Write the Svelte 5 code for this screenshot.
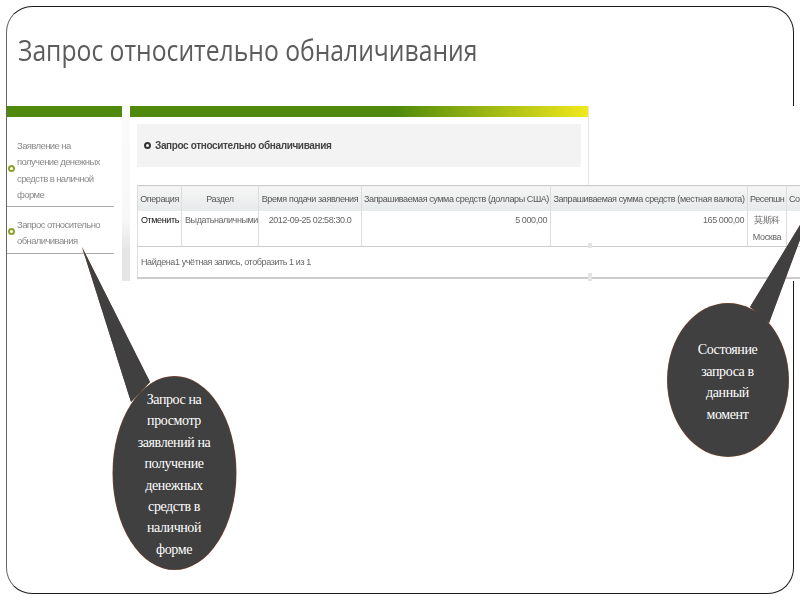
<script>
  const columns = [
    { label: "Операция", width: 44 },
    { label: "Раздел", width: 77 },
    { label: "Время подачи заявления", width: 103 },
    { label: "Запрашиваемая сумма средств (доллары США)", width: 189 },
    { label: "Запрашиваемая сумма средств (местная валюта)", width: 197 },
    { label: "Ресепшн", width: 39 },
    { label: "Состояние", width: 60 },
  ];

  const bubbles = [
    {
      tail: "M150 382 L82 247 L131 402",
      cx: 174.5, cy: 473, rx: 62, ry: 97,
      top: 399, step: 21.4,
      lines: ["Запрос на", "просмотр", "заявлений на", "получение", "денежных", "средств в", "наличной", "форме"],
    },
    {
      tail: "M750 307 L814 202 L769 323",
      cx: 728, cy: 380, rx: 61, ry: 77,
      top: 349, step: 21.5,
      lines: ["Состояние", "запроса в", "данный", "момент"],
    },
  ];
</script>

<div class="slide">
  <h1>Запрос относительно обналичивания</h1>

  <div class="shot">
    <aside>
      <div class="bar"></div>
      <ul>
        <li>Заявление на получение денежных средств в наличной форме</li>
        <li>Запрос относительно обналичивания</li>
      </ul>
    </aside>

    <main>
      <div class="panel">
        <div class="bar gradient"></div>
        <div class="heading"><i></i>Запрос относительно обналичивания</div>
      </div>

      <table>
        <colgroup>
          {#each columns as c}
            <col style="width: {c.width}px" />
          {/each}
        </colgroup>
        <thead>
          <tr>
            {#each columns as c}
              <th>{c.label}</th>
            {/each}
          </tr>
        </thead>
        <tbody>
          <tr class="row">
            <td class="action">Отменить</td>
            <td>Выдатьналичными</td>
            <td class="center">2012-09-25 02:58:30.0</td>
            <td class="num">5 000,00</td>
            <td class="num">165 000,00</td>
            <td class="center">莫斯科<br />Москва</td>
            <td></td>
          </tr>
          <tr class="foot">
            <td colspan="7">Найдена1 учётная запись, отобразить 1 из 1</td>
          </tr>
        </tbody>
      </table>

      <span class="tick one"></span>
      <span class="tick two"></span>
    </main>
  </div>
</div>

<svg class="callouts" width="800" height="600" viewBox="0 0 800 600">
  {#each bubbles as b}
    <ellipse cx={b.cx} cy={b.cy} rx={b.rx} ry={b.ry} class="edge" />
    <path d="{b.tail} Z" class="edge" />
    <ellipse cx={b.cx} cy={b.cy} rx={b.rx - 0.5} ry={b.ry - 0.5} class="fill" />
    <path d="{b.tail} Z" class="fill" />
    {#each b.lines as line, i}
      <text x={b.cx - 0.5} y={b.top + i * b.step + 5}>{line}</text>
    {/each}
  {/each}
</svg>

<style>
  :global(body) {
    overflow: hidden;
    height: 600px;
    background: #fff;
  }

  .slide {
    box-sizing: border-box;
    width: 788px;
    height: 588px;
    margin: 6px 6px 0;
    border: 1px solid #1c1c1c;
    border-left-color: #666;
    border-radius: 26px;
    font-family: "Liberation Sans", Arial, sans-serif;
  }

  h1 {
    margin: 0;
    height: 99px;
    padding: 22px 0 0 11px;
    box-sizing: border-box;
    font-family: "Open Sans", sans-serif;
    font-size: 30px;
    line-height: 42px;
    font-weight: 400;
    color: #5c5c5c;
    white-space: nowrap;
    transform: scaleX(0.823);
    transform-origin: 11px 0;
    filter: blur(0.3px);
  }

  .shot {
    display: flex;
    height: 175px;
    margin-right: -7px;
    background: #fff;
    filter: blur(0.35px);
    overflow: hidden;
  }

  aside {
    flex: none;
    width: 115px;
    padding-right: 8px;
    background: linear-gradient(#fbfbfb 0, #f7f7f7 65%, #e6e6e6 82%) right / 8px 100% no-repeat;
  }

  .bar {
    height: 11px;
    background: #4f8a0c;
  }

  .gradient {
    background: linear-gradient(90deg, #4f8a0c 0, #4f8a0c 58%, #f1e81c 100%);
  }

  ul {
    margin: 0;
    padding: 21px 8px 0 0;
    list-style: none;
  }

  li {
    position: relative;
    padding: 0 6px 3px 10px;
    margin-bottom: 10px;
    border-bottom: 1px solid #aaa;
    font-size: 9.5px;
    letter-spacing: -0.6px;
    line-height: 16.3px;
    color: #8a8a8a;
  }

  li::before {
    content: "";
    position: absolute;
    left: 1px;
    top: calc(50% - 7px);
    width: 3px;
    height: 3px;
    border: 2px solid #8ca528;
    border-radius: 50%;
  }

  main {
    position: relative;
    flex: 1;
    min-width: 0;
  }

  .panel {
    box-sizing: border-box;
    width: 459px;
    height: 79px;
    border-right: 1px solid #e6e6e6;
  }

  .heading {
    display: flex;
    align-items: center;
    gap: 4px;
    width: 444px;
    height: 43px;
    margin: 7px 0 0 7px;
    padding-left: 7px;
    box-sizing: border-box;
    background: #f3f3f3;
    font-size: 10px;
    letter-spacing: -0.37px;
    font-weight: 700;
    color: #444;
  }

  .heading i {
    width: 3px;
    height: 3px;
    border: 2px solid #333;
    border-radius: 50%;
  }

  table {
    table-layout: fixed;
    width: 709px;
    margin-left: 7px;
    border-collapse: collapse;
    border-top: 1px solid #ccc;
    border-left: 1px solid #ccc;
    font-size: 9px;
    letter-spacing: -0.4px;
    color: #666;
  }

  th {
    height: 25px;
    padding: 0 2px;
    white-space: nowrap;
    overflow: hidden;
    font-weight: 400;
    color: #555;
    background: linear-gradient(#f6f6f6, #e6eaea);
    border-left: 1px solid #ddd;
  }

  th:last-child {
    text-align: left;
  }

  td {
    padding: 0 3px;
    vertical-align: top;
    white-space: nowrap;
    border-left: 1px solid #ddd;
  }

  .row td {
    height: 34px;
    padding-top: 1px;
    box-sizing: border-box;
    line-height: 17px;
    border-bottom: 1px solid #ccc;
  }

  .action {
    color: #111;
  }

  .center {
    text-align: center;
  }

  .num {
    text-align: right;
  }

  .foot td {
    height: 30px;
    vertical-align: middle;
    border-bottom: 2px solid #ccc;
  }

  .tick {
    position: absolute;
    left: 458px;
    width: 4px;
    background: #e4e4e4;
  }

  .one {
    top: 137px;
    height: 5px;
  }

  .two {
    top: 167px;
    height: 8px;
  }

  .callouts {
    position: absolute;
    left: 0;
    top: 0;
  }

  .edge {
    fill: #8a4a30;
  }

  .fill {
    fill: #404040;
  }

  text {
    fill: #fff;
    font-family: "Liberation Serif", "Times New Roman", serif;
    font-size: 14px;
    letter-spacing: -0.4px;
    text-anchor: middle;
  }
</style>
